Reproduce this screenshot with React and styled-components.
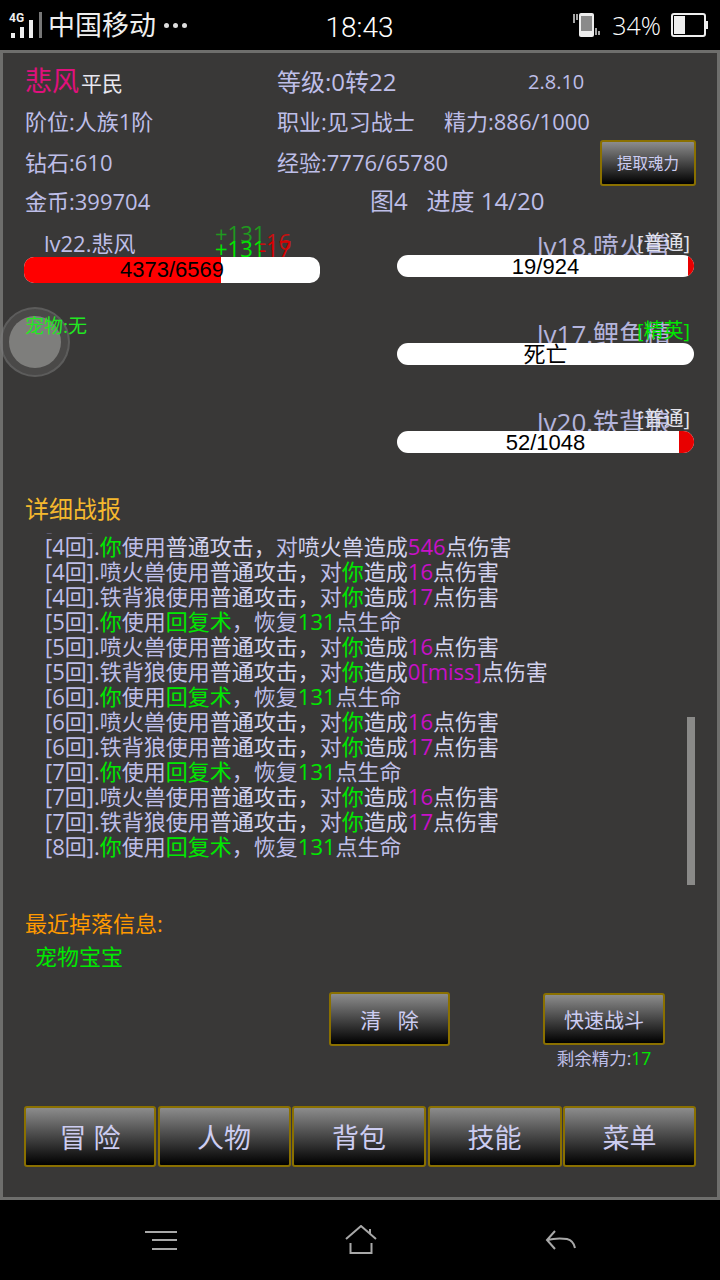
import React from "react";
import styled, { createGlobalStyle } from "styled-components";

const LAVENDER = "#bebee8";
const GREEN = "#00e800";
const MAGENTA = "#c810c8";

const GlobalStyle = createGlobalStyle`
  html, body {
    margin: 0;
    padding: 0;
    background: #000;
    font-family: "Open Sans", "Noto Sans CJK SC", sans-serif;
  }
`;

const Screen = styled.div`
  width: 720px;
  height: 1280px;
  display: flex;
  flex-direction: column;
  overflow: hidden;
  background: #000;
`;

const StatusBar = styled.div`
  height: 50px;
  display: grid;
  grid-template-columns: 1fr auto 1fr;
  align-items: center;
  color: #eee;
`;

const StatusLeft = styled.div`
  display: flex;
  align-items: center;
  padding-left: 8px;
`;

const Carrier = styled.span`
  margin-left: 6px;
  font-size: 27px;
  line-height: 50px;
`;

const Dots = styled.span`
  display: flex;
  gap: 4px;
  margin-left: 8px;
`;

const Dot = styled.i`
  width: 5px;
  height: 5px;
  border-radius: 50%;
  background: #ddd;
`;

const Clock = styled.span`
  font: 300 28px Roboto, sans-serif;
  padding: 4px 1px 0 0;
  color: #fff;
`;

const StatusRight = styled.div`
  display: flex;
  align-items: center;
  justify-content: flex-end;
  padding-right: 11px;
`;

const Percent = styled.span`
  font-size: 25px;
  font-weight: 300;
  margin: 0 10px 0 11px;
  color: #fff;
`;

const Frame = styled.div`
  box-sizing: border-box;
  height: 1150px;
  border: 3px solid #6e6e6c;
  background: #393837;
  padding: 9px 22px 0;
  color: ${LAVENDER};
  font-size: 22px;
  position: relative;
`;

const InfoRow = styled.div`
  box-sizing: border-box;
  display: flex;
  align-items: center;
  height: ${(p) => p.$h}px;
  padding-top: ${(p) => p.$drop || 0}px;
`;

const InfoCell = styled.div`
  width: ${(p) => p.$w}px;
  flex: none;
  white-space: nowrap;
  font-size: ${(p) => p.$size || 22}px;
  line-height: 30px;
  margin-top: -2px;
`;

const HeroName = styled.span`
  color: #e0107c;
  font-size: 27px;
  margin-right: 2px;
`;

const Rank = styled.span`
  color: #e8e8f0;
  font-size: 21px;
`;

const GoldButton = styled.div`
  box-sizing: border-box;
  width: ${(p) => (p.$w ? `${p.$w}px` : "auto")};
  height: ${(p) => p.$h}px;
  flex: none;
  display: flex;
  align-items: center;
  justify-content: center;
  border: 2px solid #8a7000;
  border-radius: 3px;
  background: linear-gradient(#8c8c8c, #000);
  color: #cdcdf2;
  font-size: ${(p) => p.$size}px;
  white-space: pre;
`;

const Battle = styled.div`
  height: 270px;
  display: grid;
  grid-template-columns: 295px 297px;
  column-gap: 77px;
`;

const HeroColumn = styled.div`
  position: relative;
`;

const HeroLabel = styled.div`
  height: 37px;
  padding: 0 0 0 19px;
  box-sizing: border-box;
  line-height: 46px;
  white-space: nowrap;
`;

const Floating = styled.span`
  position: absolute;
  left: ${(p) => p.$x}px;
  top: ${(p) => p.$y}px;
  color: ${(p) => p.$color};
  line-height: 24px;
`;

const HeroBar = styled.div`
  position: relative;
  width: 296px;
  height: 26px;
  margin-left: -1px;
  border-radius: 10px;
  overflow: hidden;
  background: #fff;
  color: #000;
  font: 22px/26px "Liberation Sans", sans-serif;
  text-align: center;
`;

const HeroFill = styled.div`
  position: absolute;
  inset: 0 auto 0 0;
  background: #ff0000;
`;

const BarLabel = styled.span`
  position: relative;
`;

const Pet = styled.div`
  position: relative;
  z-index: 1;
  margin-top: 31px;
  color: #22e822;
  font-size: 19px;
  line-height: 24px;
`;

// touch overlay that floats over the page's left edge
const Joystick = styled.div`
  position: absolute;
  left: -3px;
  top: 254px;
  box-sizing: border-box;
  width: 70px;
  height: 70px;
  display: flex;
  align-items: center;
  justify-content: center;
  border-radius: 50%;
  background: rgba(120, 120, 118, 0.28);
  border: 2px solid rgba(130, 130, 128, 0.35);
`;

const JoystickKnob = styled.div`
  width: 52px;
  height: 52px;
  border-radius: 50%;
  background: #7e7e7c;
`;

const Enemy = styled.div`
  height: 88px;
  position: relative;
`;

const EnemyLabel = styled.div`
  height: 35px;
  padding-left: 140px;
  font-size: 26px;
  line-height: 53px;
  white-space: nowrap;
  color: #b4b4dc;
`;

const EnemyTag = styled.span`
  position: absolute;
  right: 4px;
  top: 11px;
  font-size: 20px;
  line-height: 24px;
  color: ${(p) => (p.$elite ? GREEN : "#e4e4ec")};
`;

const EnemyBar = styled.div`
  position: relative;
  height: 22px;
  border-radius: 11px;
  overflow: hidden;
  background: #fff;
  color: #000;
  font: 22px/23px "Liberation Sans", "Noto Sans CJK SC", sans-serif;
  text-align: center;
`;

const EnemyFill = styled.div`
  position: absolute;
  inset: 0 0 0 auto;
  background: #e80000;
`;

const SectionTitle = styled.div`
  height: 38px;
  line-height: 38px;
  font-size: 24px;
  color: #f5b82e;
`;

const LogPanel = styled.div`
  position: relative;
  height: 352px;
  margin-top: 5px;
  overflow: hidden;
  padding-left: 20px;
`;

const LogList = styled.div`
  margin-top: -24px;
`;

const LogLine = styled.div`
  height: 25px;
  line-height: 25px;
  white-space: nowrap;
`;

const Seg = styled.span`
  color: ${(p) => p.$color};
`;

const ScrollThumb = styled.div`
  position: absolute;
  right: 0;
  bottom: 0;
  width: 8px;
  height: 168px;
  background: #8a8a88;
`;

const DropTitle = styled.div`
  margin-top: 20px;
  height: 36px;
  line-height: 36px;
  color: #ff9a00;
`;

const DropItem = styled.div`
  height: 30px;
  line-height: 30px;
  padding-left: 10px;
  color: ${GREEN};
`;

const Actions = styled.div`
  display: flex;
  align-items: flex-start;
  height: 54px;
  margin-top: 21px;
  padding-left: 304px;
  column-gap: 93px;
`;

const QuickColumn = styled.div`
  display: flex;
  flex-direction: column;
  align-items: center;
  padding-top: 1px;
`;

const Remaining = styled.div`
  margin-top: 2px;
  font-size: 17.5px;
  line-height: 22px;
`;

const MainNav = styled.div`
  display: grid;
  grid-template-columns: 132px 133px 134px 134px 133px;
  column-gap: 1.5px;
  width: 672px;
  height: 61px;
  margin: 60px 0 0 -1px;
`;

const NavBar = styled.div`
  height: 80px;
  display: grid;
  grid-template-columns: 145px 32px 168px 32px 168px 32px;
  align-items: center;
  background: #000;
`;

const NavIcon = styled.svg`
  grid-column: ${(p) => p.$col};
  display: block;
  fill: none;
  stroke: #a8a8a8;
  stroke-width: 2;
`;

const colours = { w: LAVENDER, y: GREEN, h: MAGENTA, n: "#d2d2ee" };

// each line: [text, colour key] pairs
const line = (round, actor, rest) => [
  [`[${round}回].`, "w"],
  ...actor,
  ...rest,
];

const you = [["你", "y"]];
const healRest = [
  ["使用", "w"],
  ["回复术", "y"],
  ["，恢复", "w"],
  ["131", "y"],
  ["点生命", "w"],
];
const attack = (name, target, dmg) => [
  [name, "w"],
  ["使用", "w"],
  ["普通攻击，", "n"],
  ["对", "w"],
  ...(target === "你" ? [["你", "y"]] : [[target, "n"]]),
  ["造成", "n"],
  [dmg, "h"],
  ["点伤害", "n"],
];

const logLines = [
  line(3, [], attack("铁背狼", "你", "17")),
  line(4, you, attack("", "喷火兽", "546")),
  line(4, [], attack("喷火兽", "你", "16")),
  line(4, [], attack("铁背狼", "你", "17")),
  line(5, you, healRest),
  line(5, [], attack("喷火兽", "你", "16")),
  line(5, [], attack("铁背狼", "你", "0[miss]")),
  line(6, you, healRest),
  line(6, [], attack("喷火兽", "你", "16")),
  line(6, [], attack("铁背狼", "你", "17")),
  line(7, you, healRest),
  line(7, [], attack("喷火兽", "你", "16")),
  line(7, [], attack("铁背狼", "你", "17")),
  line(8, you, healRest),
];

const enemies = [
  { name: "lv18.喷火兽", tag: "[普通]", hp: 19, max: 924 },
  { name: "lv17.鲤鱼精", tag: "[精英]", elite: true, hp: 0, max: 800 },
  { name: "lv20.铁背狼", tag: "[普通]", hp: 52, max: 1048 },
];

const SignalIcon = () => (
  <svg width="34" height="50" viewBox="0 0 34 50">
    <text x="1" y="22" fill="#eee" fontSize="12" fontWeight="700" fontFamily="Roboto, sans-serif">
      4G
    </text>
    <rect x="3" y="33" width="4" height="5" fill="#eee" />
    <rect x="12" y="27" width="4" height="11" fill="#eee" />
    <rect x="21" y="20" width="4" height="18" fill="#eee" />
    <rect x="31" y="12" width="3" height="26" fill="#777" />
  </svg>
);

const VibrateIcon = () => (
  <svg width="28" height="26" viewBox="0 0 28 26">
    <rect x="6" y="1" width="15" height="24" rx="2" fill="#eee" />
    <rect x="8" y="4" width="11" height="15" fill="#8a8a8a" />
    <path d="M1 2v9M4 2v6M23 16v7M26 19v4" stroke="#ddd" strokeWidth="1.5" />
  </svg>
);

const BatteryIcon = () => (
  <svg width="38" height="24" viewBox="0 0 38 24">
    <rect x="1" y="1" width="33" height="22" rx="2" fill="none" stroke="#eee" strokeWidth="2" />
    <rect x="3" y="3" width="11" height="18" fill="#eee" />
    <rect x="35" y="8" width="2" height="8" fill="#eee" />
  </svg>
);

const App = () => (
  <Screen>
    <GlobalStyle />
    <StatusBar>
      <StatusLeft>
        <SignalIcon />
        <Carrier>中国移动</Carrier>
        <Dots>
          <Dot />
          <Dot />
          <Dot />
        </Dots>
      </StatusLeft>
      <Clock>18:43</Clock>
      <StatusRight>
        <VibrateIcon />
        <Percent>34%</Percent>
        <BatteryIcon />
      </StatusRight>
    </StatusBar>

    <Frame>
      <InfoRow $h={40} $drop={2}>
        <InfoCell $w={252}>
          <HeroName>悲风</HeroName>
          <Rank>平民</Rank>
        </InfoCell>
        <InfoCell $w={251} $size={24}>
          等级:0转22
        </InfoCell>
        <InfoCell $w={100} $size={20}>
          2.8.10
        </InfoCell>
      </InfoRow>
      <InfoRow $h={39}>
        <InfoCell $w={252}>阶位:人族1阶</InfoCell>
        <InfoCell $w={167}>职业:见习战士</InfoCell>
        <InfoCell $w={200}>精力:886/1000</InfoCell>
      </InfoRow>
      <InfoRow $h={43}>
        <InfoCell $w={252}>钻石:610</InfoCell>
        <InfoCell $w={323}>经验:7776/65780</InfoCell>
        <GoldButton $w={96} $h={46} $size={15.5}>
          提取魂力
        </GoldButton>
      </InfoRow>
      <InfoRow $h={36}>
        <InfoCell $w={345}>金币:399704</InfoCell>
        <InfoCell $w={250} $size={24}>
          图4&nbsp;&nbsp;&nbsp;进度 14/20
        </InfoCell>
      </InfoRow>

      <Battle>
        <HeroColumn>
          <HeroLabel>lv22.悲风</HeroLabel>
          <Floating $x={190} $y={1} $color="#1f9a1f">
            +131
          </Floating>
          <Floating $x={190} $y={16} $color="#00e800">
            +131
          </Floating>
          <Floating $x={234} $y={9} $color="#c81010">
            -16
          </Floating>
          <Floating $x={234} $y={16} $color="#d80000">
            -17
          </Floating>
          <HeroBar>
            <HeroFill style={{ width: `${(4373 / 6569) * 100}%` }} />
            <BarLabel>4373/6569</BarLabel>
          </HeroBar>
          <Pet>宠物:无</Pet>
        </HeroColumn>
        <div>
          {enemies.map((e) => (
            <Enemy key={e.name}>
              <EnemyLabel>{e.name}</EnemyLabel>
              <EnemyTag $elite={e.elite}>{e.tag}</EnemyTag>
              <EnemyBar>
                {e.hp > 0 && <EnemyFill style={{ width: `${(e.hp / e.max) * 100}%` }} />}
                <BarLabel>{e.hp > 0 ? `${e.hp}/${e.max}` : "死亡"}</BarLabel>
              </EnemyBar>
            </Enemy>
          ))}
        </div>
      </Battle>

      <SectionTitle>详细战报</SectionTitle>
      <LogPanel>
        <LogList>
          {logLines.map((segs, i) => (
            <LogLine key={i}>
              {segs.map(([text, c], j) => (
                <Seg key={j} $color={colours[c]}>
                  {text}
                </Seg>
              ))}
            </LogLine>
          ))}
        </LogList>
        <ScrollThumb />
      </LogPanel>

      <DropTitle>最近掉落信息:</DropTitle>
      <DropItem>宠物宝宝</DropItem>

      <Actions>
        <GoldButton $w={121} $h={54} $size={21}>
          {"清   除"}
        </GoldButton>
        <QuickColumn>
          <GoldButton $w={122} $h={52} $size={20}>
            快速战斗
          </GoldButton>
          <Remaining>
            剩余精力:<Seg $color={GREEN}>17</Seg>
          </Remaining>
        </QuickColumn>
      </Actions>

      <MainNav>
        {["冒 险", "人物", "背包", "技能", "菜单"].map((label) => (
          <GoldButton key={label} $h={61} $size={27}>
            {label}
          </GoldButton>
        ))}
      </MainNav>

      <Joystick>
        <JoystickKnob />
      </Joystick>
    </Frame>

    <NavBar>
      <NavIcon $col={2} width="32" height="20" viewBox="0 0 32 20">
        <path d="M0 2h32M7 10h25M7 19h25" />
      </NavIcon>
      <NavIcon $col={4} width="32" height="30" viewBox="0 0 32 30">
        <path d="M1 14 16 1l15 13M25 4v5M5.500 18v10h21V18" />
      </NavIcon>
      <NavIcon $col={6} width="32" height="22" viewBox="0 0 32 22">
        <path d="M10 2 2 11l8 9M2 11c8-2 14-2 20-1 4 1 7 4 8 9" />
      </NavIcon>
    </NavBar>
  </Screen>
);

export default App;
